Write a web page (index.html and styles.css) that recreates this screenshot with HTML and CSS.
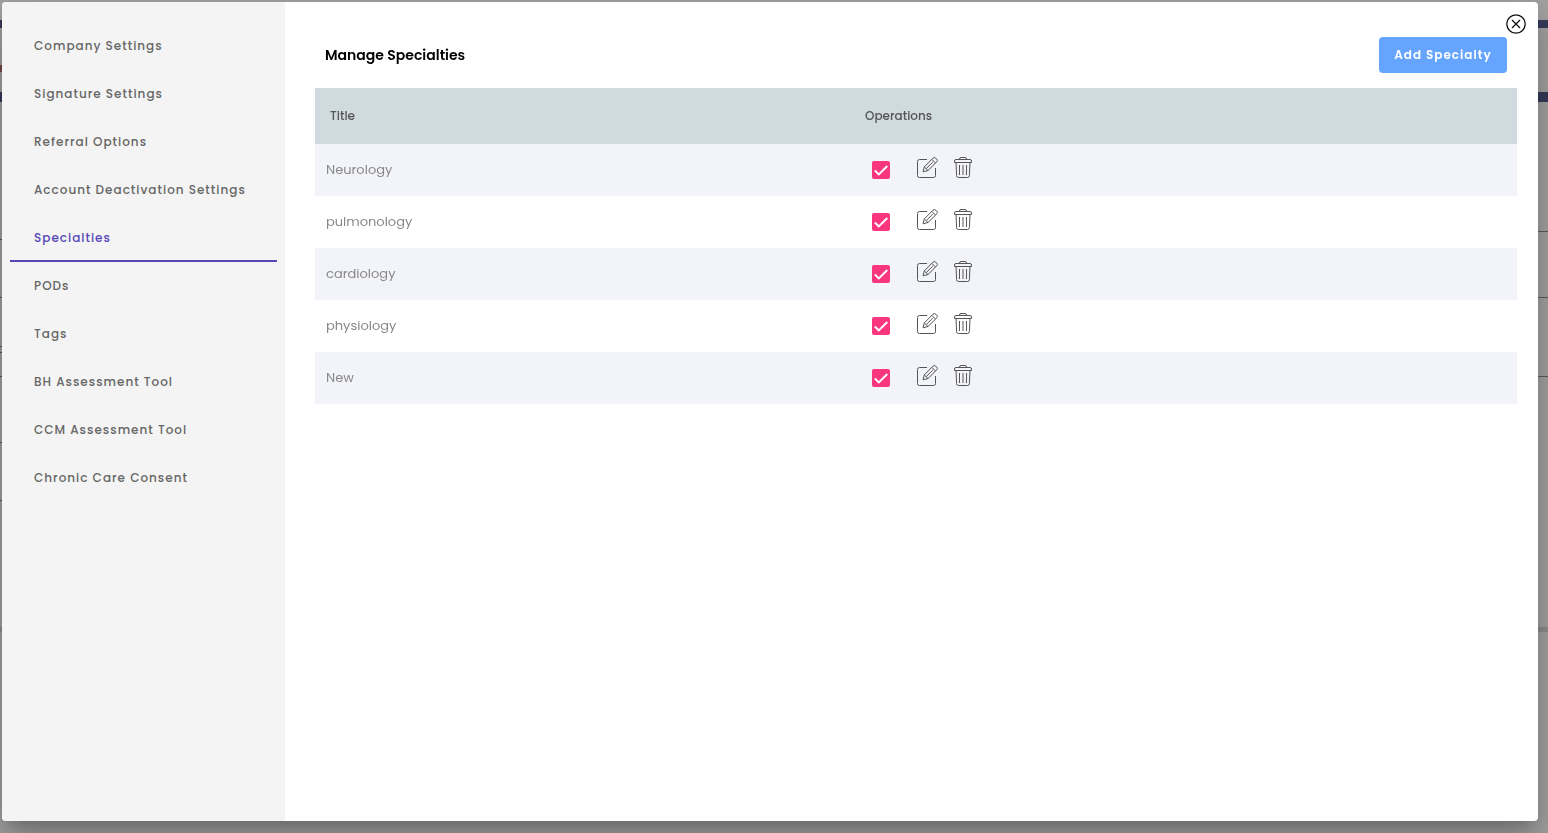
FILE: index.html
```html
<!DOCTYPE html>
<html lang="en">
<head>
  <meta charset="UTF-8">
  <meta name="viewport" content="width=device-width, initial-scale=1.0">
  <title>Manage Specialties</title>
  <link rel="stylesheet" href="styles.css">
</head>
<body>
  <!-- dimmed page under the dialog -->
  <div class="page" aria-hidden="true">
    <div class="page-top"></div>
    <div class="page-nav"><div class="page-mark"></div></div>
    <div class="page-body">
      <div class="page-col">
        <div class="line line-left"></div>
        <div class="line line-sm"></div>
        <div class="line line-field"></div>
        <div class="line line-xs"></div>
        <div class="line line-tick"></div>
        <div class="line"></div>
        <div class="line line-sm"></div>
      </div>
      <div class="page-col">
        <div class="line line-right"></div>
        <div class="line"></div>
        <div class="line line-lg"></div>
      </div>
    </div>
    <div class="page-footer"></div>
  </div>

  <svg class="sprite" width="0" height="0" aria-hidden="true">
    <symbol id="icon-edit" viewBox="0 0 21 21">
      <path d="M10 2.500H2.500a2 2 0 0 0-2 2v14a2 2 0 0 0 2 2h14a2 2 0 0 0 2-2v-7.500"/>
      <path d="M6 14.800l1.300-4.900L16 1.200a2 2 0 0 1 2.800 0l.9.900a2 2 0 0 1 0 2.800L11 13.500z"/>
      <path d="M7.300 9.900l3.700 3.600M14.800 2.400l3.700 3.700M9.200 11.700l6.500-6.500"/>
    </symbol>
    <symbol id="icon-trash" viewBox="0 0 18 21">
      <path d="M5.500 2.500V2A1.500 1.500 0 0 1 7 .5h4A1.500 1.500 0 0 1 12.500 2v.5"/>
      <path d="M2 2.500h14A1.500 1.500 0 0 1 17.500 4v1.500H.5V4A1.500 1.500 0 0 1 2 2.500z"/>
      <path d="M2 5.500l.6 13a2 2 0 0 0 2 2h8.800a2 2 0 0 0 2-2l.6-13"/>
      <path d="M5.500 8v10M9 8v10M12.500 8v10"/>
    </symbol>
  </svg>

  <div class="dialog" role="dialog" aria-labelledby="dialogTitle">
    <nav class="sidebar">
      <a class="tab" href="#company">Company Settings</a>
      <a class="tab" href="#signature">Signature Settings</a>
      <a class="tab" href="#referral">Referral Options</a>
      <a class="tab" href="#deactivation">Account Deactivation Settings</a>
      <a class="tab active" href="#specialties">Specialties</a>
      <a class="tab" href="#pods">PODs</a>
      <a class="tab" href="#tags">Tags</a>
      <a class="tab" href="#bh">BH Assessment Tool</a>
      <a class="tab" href="#ccm">CCM Assessment Tool</a>
      <a class="tab" href="#consent">Chronic Care Consent</a>
    </nav>

    <main class="content">
      <button class="close" type="button" aria-label="Close">
        <svg width="20" height="20" viewBox="0 0 20 20">
          <circle cx="10" cy="10" r="9.200"/>
          <path d="M6 6l8 8M14 6l-8 8"/>
        </svg>
      </button>

      <div class="content-header">
        <h1 id="dialogTitle">Manage Specialties</h1>
        <button class="btn-add" type="button">Add Specialty</button>
      </div>

      <table class="specialties">
        <thead>
          <tr>
            <th class="col-title">Title</th>
            <th>Operations</th>
          </tr>
        </thead>
        <tbody>
          <tr>
            <td>Neurology</td>
            <td>
              <div class="operations">
                <input type="checkbox" aria-label="Neurology active" checked>
                <button class="icon-btn" type="button" aria-label="Edit"><svg width="21" height="21"><use href="#icon-edit"/></svg></button>
                <button class="icon-btn" type="button" aria-label="Delete"><svg width="18" height="21"><use href="#icon-trash"/></svg></button>
              </div>
            </td>
          </tr>
          <tr>
            <td>pulmonology</td>
            <td>
              <div class="operations">
                <input type="checkbox" aria-label="pulmonology active" checked>
                <button class="icon-btn" type="button" aria-label="Edit"><svg width="21" height="21"><use href="#icon-edit"/></svg></button>
                <button class="icon-btn" type="button" aria-label="Delete"><svg width="18" height="21"><use href="#icon-trash"/></svg></button>
              </div>
            </td>
          </tr>
          <tr>
            <td>cardiology</td>
            <td>
              <div class="operations">
                <input type="checkbox" aria-label="cardiology active" checked>
                <button class="icon-btn" type="button" aria-label="Edit"><svg width="21" height="21"><use href="#icon-edit"/></svg></button>
                <button class="icon-btn" type="button" aria-label="Delete"><svg width="18" height="21"><use href="#icon-trash"/></svg></button>
              </div>
            </td>
          </tr>
          <tr>
            <td>physiology</td>
            <td>
              <div class="operations">
                <input type="checkbox" aria-label="physiology active" checked>
                <button class="icon-btn" type="button" aria-label="Edit"><svg width="21" height="21"><use href="#icon-edit"/></svg></button>
                <button class="icon-btn" type="button" aria-label="Delete"><svg width="18" height="21"><use href="#icon-trash"/></svg></button>
              </div>
            </td>
          </tr>
          <tr>
            <td>New</td>
            <td>
              <div class="operations">
                <input type="checkbox" aria-label="New active" checked>
                <button class="icon-btn" type="button" aria-label="Edit"><svg width="21" height="21"><use href="#icon-edit"/></svg></button>
                <button class="icon-btn" type="button" aria-label="Delete"><svg width="18" height="21"><use href="#icon-trash"/></svg></button>
              </div>
            </td>
          </tr>
        </tbody>
      </table>
    </main>
  </div>
</body>
</html>
```

FILE: styles.css
```css
* {
  box-sizing: border-box;
}
body {
  margin: 0;
  font-family: Poppins, Inter, sans-serif;
  font-size: 13px;
  background: #a3a3a3;
  overflow: hidden;
}
button {
  font-family: inherit;
  border: none;
  cursor: pointer;
}
.sprite {
  position: absolute;
}

/* page under the dialog */
.page {
  position: absolute;
  inset: 0;
  overflow: hidden;
}
.page-top {
  height: 28px;
  border-bottom: 8px solid #363b5c;
}
.page-nav {
  height: 74px;
  padding-top: 37px;
  border-bottom: 10px solid #363b5c;
}
.page-mark {
  width: 2px;
  height: 7px;
  background: #7a4a4a;
}
.page-body {
  height: 525px;
  display: flex;
}
.page-col {
  flex: 1;
}
.line {
  height: 66px;
  border-bottom: 1px solid #5c5c5c;
}
.line-left {
  height: 138px;
}
.line-right {
  height: 130px;
}
.line-xs {
  height: 6px;
}
.line-tick {
  height: 24px;
}
.line-field {
  height: 49px;
}
.line-sm {
  height: 58px;
}
.line-lg {
  height: 79px;
}
.page-footer {
  height: 5px;
  background: #8f8f8f;
}

/* dialog */
.dialog {
  position: fixed;
  inset: 2px 10px 12px 2px;
  display: flex;
  background: #fff;
  border-radius: 4px;
  box-shadow: 0 11px 15px -7px rgba(0,0,0,0.2), 0 24px 38px 3px rgba(0,0,0,0.14), 0 9px 46px 8px rgba(0,0,0,0.12);
}
.sidebar {
  flex: 0 0 283px;
  min-width: 0;
  padding: 20px 8px;
  background: #f4f4f4;
  border-radius: 4px 0 0 4px;
}
.tab {
  display: flex;
  align-items: center;
  height: 48px;
  padding: 0 24px;
  color: #666;
  font-size: 12px;
  font-weight: 500;
  letter-spacing: 1px;
  text-decoration: none;
  white-space: nowrap;
}
.tab.active {
  color: #5546b8;
  box-shadow: inset 0 -2px #5546b8;
}
.content {
  flex: 1;
  position: relative;
  padding: 35px 21px 0 30px;
}
.close {
  position: absolute;
  top: 12px;
  right: 12px;
  padding: 0;
  background: none;
}
.close svg {
  display: block;
  fill: none;
  stroke: #111;
  stroke-width: 1.3;
}
.content-header {
  display: flex;
  justify-content: space-between;
  align-items: center;
  padding: 0 10px;
  margin-bottom: 15px;
}
h1 {
  margin: 0;
  font-size: 14px;
  font-weight: 600;
  color: #000;
}
.btn-add {
  height: 36px;
  min-width: 128px;
  padding: 0 15px;
  background: #66a5ff;
  color: #fff;
  border-radius: 4px;
  font-size: 12px;
  font-weight: 600;
  letter-spacing: 1px;
}

/* table */
.specialties {
  width: 100%;
  table-layout: fixed;
  border-collapse: collapse;
  text-align: left;
}
.col-title {
  width: 535px;
}
th {
  height: 56px;
  padding: 0 15px;
  background: #d0dbe0;
  color: #555;
  font-size: 12px;
  font-weight: 500;
}
td {
  height: 52px;
  padding: 0 11px;
  color: #888;
}
tbody tr:nth-child(odd) {
  background: #f3f4f9;
}
.operations {
  display: flex;
  align-items: center;
  padding-left: 11px;
}
.operations input {
  appearance: none;
  width: 18px;
  height: 18px;
  margin: 0 27px 0 0;
  border-radius: 2px;
  background: #fa377e url("data:image/svg+xml,%3Csvg xmlns='http://www.w3.org/2000/svg' viewBox='0 0 18 18'%3E%3Cpath d='M2.800 9.500l4 4 8.500-8.500' fill='none' stroke='white' stroke-width='1.900'/%3E%3C/svg%3E");
}
.operations input:not(:checked) {
  background: #fff;
  border: 2px solid #757575;
}
.icon-btn {
  padding: 0 0 6px;
  margin-right: 16px;
  background: none;
}
.icon-btn svg {
  display: block;
  fill: none;
  stroke: #555;
  stroke-width: 1;
}
```
